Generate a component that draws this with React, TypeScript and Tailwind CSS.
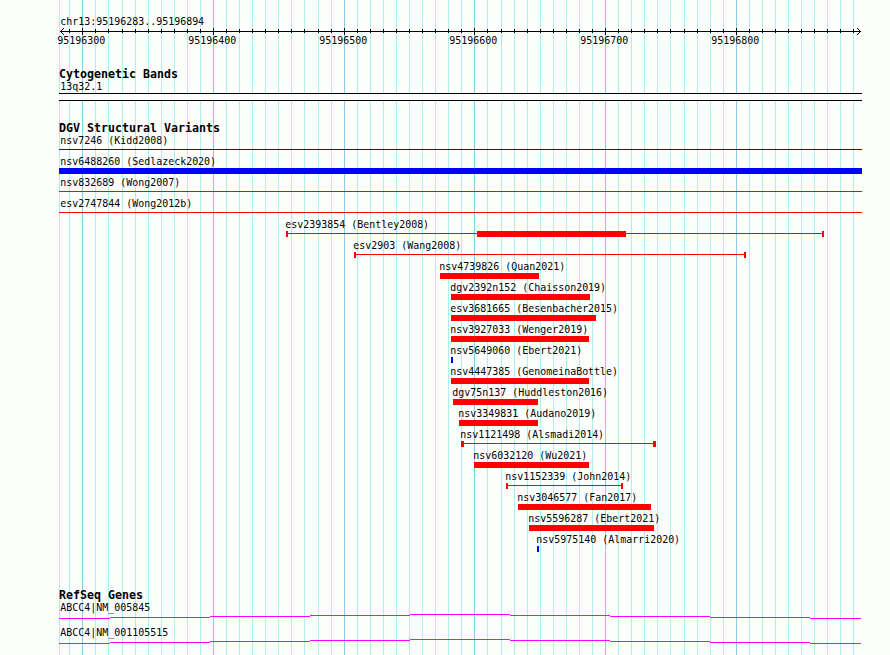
import type { ReactNode } from 'react';

type Segment = { from: number; to: number; kind: 'bar' | 'line' | 'cap' };
type Variant = { name: string; color?: string; x: number; segments: Segment[] };

const LEFT = 59;
const RIGHT = 862;

const majorLines = [82, 213, 344, 474, 605, 736];
const minorLines = [
  69, 95, 108, 122, 135, 148, 161, 174, 187, 200, 226, 239, 252, 265, 278, 291, 304, 318, 331, 357,
  370, 383, 396, 409, 422, 435, 448, 461, 487, 501, 514, 527, 540, 553, 566, 579, 592, 618, 631, 644,
  657, 670, 684, 697, 710, 723, 749, 762, 775, 788, 801, 814, 827, 840, 853,
];

const bar = (from: number, to: number): Segment => ({ from, to, kind: 'bar' });
const line = (from: number, to: number): Segment => ({ from, to, kind: 'line' });
const cap = (from: number, to: number): Segment => ({ from, to, kind: 'cap' });

const variants: Variant[] = [
  { name: 'nsv7246 (Kidd2008)', color: 'bg-[#4b0082]', x: 61, segments: [line(LEFT, RIGHT)] },
  { name: 'nsv6488260 (Sedlazeck2020)', color: 'bg-[#0000ff]', x: 61, segments: [bar(LEFT, RIGHT)] },
  { name: 'nsv832689 (Wong2007)', x: 61, segments: [line(LEFT, RIGHT)] },
  { name: 'esv2747844 (Wong2012b)', x: 61, segments: [line(LEFT, RIGHT)] },
  { name: 'esv2393854 (Bentley2008)', x: 286, segments: [cap(286, 288), line(288, 477), bar(477, 626), line(626, 822), cap(822, 824)] },
  { name: 'esv2903 (Wang2008)', x: 354, segments: [cap(354, 356), line(356, 744), cap(744, 746)] },
  { name: 'nsv4739826 (Quan2021)', x: 440, segments: [bar(440, 539)] },
  { name: 'dgv2392n152 (Chaisson2019)', x: 451, segments: [bar(451, 590)] },
  { name: 'esv3681665 (Besenbacher2015)', x: 451, segments: [bar(451, 596)] },
  { name: 'nsv3927033 (Wenger2019)', x: 451, segments: [bar(451, 589)] },
  { name: 'nsv5649060 (Ebert2021)', color: 'bg-[#0000ff]', x: 451, segments: [bar(451, 453)] },
  { name: 'nsv4447385 (GenomeinaBottle)', x: 451, segments: [bar(451, 589)] },
  { name: 'dgv75n137 (Huddleston2016)', x: 453, segments: [bar(453, 538)] },
  { name: 'nsv3349831 (Audano2019)', x: 459, segments: [bar(459, 538)] },
  { name: 'nsv1121498 (Alsmadi2014)', x: 461, segments: [cap(461, 464), line(464, 653), cap(653, 656)] },
  { name: 'nsv6032120 (Wu2021)', x: 474, segments: [bar(474, 589)] },
  { name: 'nsv1152339 (John2014)', x: 506, segments: [cap(506, 508), line(508, 621), cap(621, 623)] },
  { name: 'nsv3046577 (Fan2017)', x: 518, segments: [bar(518, 651)] },
  { name: 'nsv5596287 (Ebert2021)', x: 529, segments: [bar(529, 654)] },
  { name: 'nsv5975140 (Almarri2020)', color: 'bg-[#0000ff]', x: 537, segments: [bar(537, 539)] },
];

const rulerLabels = [
  { text: '95196300', x: 58 },
  { text: '95196400', x: 189 },
  { text: '95196500', x: 320 },
  { text: '95196600', x: 450 },
  { text: '95196700', x: 581 },
  { text: '95196800', x: 712 },
];

const genes = ['ABCC4|NM_005845', 'ABCC4|NM_001105515'];

// Each step of the shallow intron arc: left edge, right edge, row inside the glyph.
const arcSteps = [
  [59, 110, 4], [110, 210, 3], [210, 310, 2], [310, 410, 1], [410, 510, 0],
  [510, 610, 1], [610, 710, 2], [710, 810, 3], [810, 861, 4],
];

function Label({ x, children }: { x: number; children: ReactNode }) {
  return (
    <div
      className="h-3 w-fit origin-[0_9px] scale-y-[1.14] text-[9.967px] leading-3 whitespace-pre"
      style={{ marginLeft: x - 0.7 }}
    >
      {children}
    </div>
  );
}

function Title({ children }: { children: ReactNode }) {
  return <h2 className="h-[13px] pl-[59px] text-[11.63px] leading-3 font-bold whitespace-pre">{children}</h2>;
}

function Gridlines() {
  return (
    <svg className="absolute inset-0 h-full w-full" shapeRendering="crispEdges">
      <rect x={59} width={1} height="100%" fill="#afeeee" />
      {minorLines.map((x) => <rect key={x} x={x} width={1} height="100%" fill="#afeeee" />)}
      {majorLines.map((x) => <rect key={x} x={x} width={1} height="100%" fill="#87ceeb" />)}
    </svg>
  );
}

function Ruler() {
  return (
    <header className="h-[68px] pt-4">
      <Label x={61}>chr13:95196283..95196894</Label>
      <svg className="block h-[7px] w-full" shapeRendering="crispEdges">
        <rect x={60} y={3} width={801} height={1} />
        {minorLines.map((x) => <rect key={x} x={x} y={1} width={1} height={4} />)}
        {majorLines.map((x) => <rect key={x} x={x} width={1} height={7} />)}
        {[1, 2, 3].map((d) => (
          <g key={d}>
            <rect x={60 + d} y={3 - d} width={1} height={1} />
            <rect x={60 + d} y={3 + d} width={1} height={1} />
            <rect x={860 - d} y={3 - d} width={1} height={1} />
            <rect x={860 - d} y={3 + d} width={1} height={1} />
          </g>
        ))}
      </svg>
      <div className="flex">
        {rulerLabels.map((label, i) => (
          <div key={label.text} className="w-0" style={{ marginLeft: label.x - (i ? rulerLabels[i - 1].x : 0) }}>
            <Label x={0}>{label.text}</Label>
          </div>
        ))}
      </div>
    </header>
  );
}

const shapes = { bar: 'h-1.5', cap: 'h-1.5', line: 'mt-0.5 h-px' };

function VariantRow({ name, color = 'bg-[#ff0000]', x, segments }: Variant) {
  return (
    <li className="h-[21px]">
      <Label x={x}>{name}</Label>
      <div className="flex items-start" style={{ paddingLeft: segments[0].from }}>
        {segments.map((s) => (
          <div key={s.from} className={`shrink-0 ${shapes[s.kind]} ${color}`} style={{ width: s.to - s.from }} />
        ))}
      </div>
    </li>
  );
}

export default function App() {
  return (
    <main className="relative h-[655px] w-[890px] overflow-hidden bg-[#fdfffc] font-['DejaVu_Sans_Mono','Liberation_Mono',monospace] text-black">
      <Gridlines />
      <div className="relative">
        <Ruler />
        <section className="h-[54px]">
          <Title>Cytogenetic Bands</Title>
          <Label x={61}>13q32.1</Label>
          <div className="ml-[59px] h-2 w-[803px] border-y border-black bg-[#fdfffc]" />
        </section>
        <section>
          <Title>DGV Structural Variants</Title>
          <ul>{variants.map((v) => <VariantRow key={v.name} {...v} />)}</ul>
        </section>
        <section className="pt-[34px]">
          <Title>RefSeq Genes</Title>
          {genes.map((gene) => (
            <div key={gene} className="h-[25px]">
              <Label x={61}>{gene}</Label>
              <svg className="block h-[5px] w-full" shapeRendering="crispEdges">
                {arcSteps.map(([from, to, y]) => (
                  <rect key={from} x={from} y={y} width={to - from} height={1} fill="#ff00ff" />
                ))}
              </svg>
            </div>
          ))}
        </section>
      </div>
    </main>
  );
}
